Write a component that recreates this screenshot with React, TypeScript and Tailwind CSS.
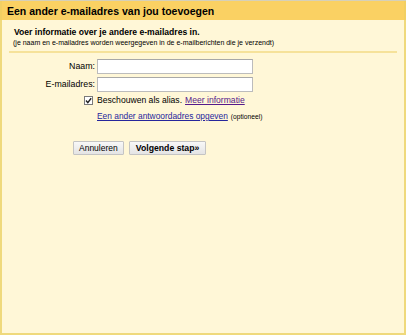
export default function App() {
  return (
    <div className="w-[406px] h-[335px] flex flex-col border-t border-[#d6d0b8] font-['Liberation_Sans',Arial,sans-serif] text-black">
      {/* titelbalk */}
      <div className="h-[19px] bg-[#fad163] px-[5px] pt-[2px] text-[10.5px] font-bold leading-[17px] border-x-2 border-[#f2cf62]">
        Een ander e-mailadres van jou toevoegen
      </div>

      {/* inhoud */}
      <div className="flex-1 bg-[#fff7d7] border-x-2 border-b-2 border-[#efd97c] px-[6px]">
        <div className="pt-[7px] pl-[6px]">
          <div className="text-[8.6px] font-bold leading-[11px]">Voer informatie over je andere e-mailadres in.</div>
          <div className="text-[7px] leading-[10px] -ml-[1px]">
            (je naam en e-mailadres worden weergegeven in de e-mailberichten die je verzendt)
          </div>
        </div>
        <div className="h-[2px] bg-[#f6e29a] mt-[3px] mx-[1px]" />

        <div className="mt-[6px] flex flex-col gap-[3px]">
          <div className="flex items-center">
            <label className="w-[89px] text-right text-[8.8px] pr-[2px]">Naam:</label>
            <div className="w-[156px] h-[15px] bg-white border border-[#bcbcbc] border-t-[#a8a8a8]" />
          </div>
          <div className="flex items-center">
            <label className="w-[89px] text-right text-[8.8px] pr-[2px]">E-mailadres:</label>
            <div className="w-[156px] h-[15px] bg-white border border-[#bcbcbc] border-t-[#a8a8a8]" />
          </div>
        </div>

        <div className="flex items-center h-[13px] mt-[2px] pl-[76px] text-[8.6px] leading-[13px]">
          <div className="w-[9px] h-[9px] bg-white border border-[#7a7a7a] flex items-center justify-center mr-[4px]">
            <svg width="7" height="7" viewBox="0 0 7 7">
              <path d="M1 3.5 L2.8 5.6 L6.2 1.2" fill="none" stroke="#222" strokeWidth="1.4" />
            </svg>
          </div>
          <span>Beschouwen als alias.</span>
          <span className="ml-[3px] text-[#551a8b] underline">Meer informatie</span>
        </div>

        <div className="mt-[3px] pl-[89px] text-[8.4px] leading-[13px]">
          <span className="text-[#26269c] underline">Een ander antwoordadres opgeven</span>
          <span className="ml-[3px] text-[6.7px]">(optioneel)</span>
        </div>

        <div className="mt-[18px] pl-[65px] flex gap-[5px]">
          <button className="h-[14px] px-[5px] text-[8.5px] leading-[12px] border border-[#c4c4c4] rounded-[1px] bg-gradient-to-b from-[#f8f8f8] to-[#e4e4e4]">
            Annuleren
          </button>
          <button className="h-[14px] px-[6px] text-[8.7px] font-bold leading-[12px] border border-[#c4c4c4] rounded-[1px] bg-gradient-to-b from-[#f8f8f8] to-[#e4e4e4]">
            Volgende stap»
          </button>
        </div>
      </div>
    </div>
  );
}
